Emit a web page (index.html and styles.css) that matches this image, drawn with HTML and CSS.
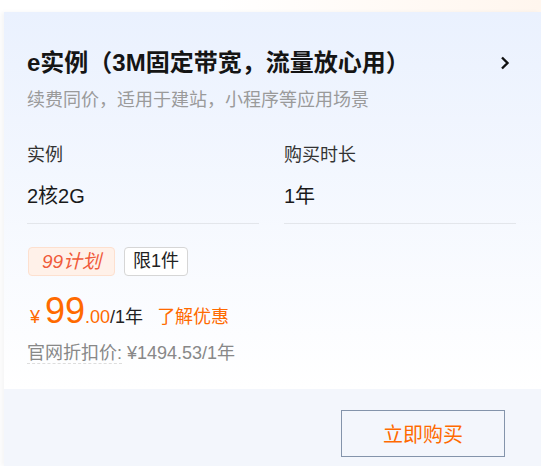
FILE: index.html
```html
<!DOCTYPE html>
<html lang="zh-CN">

<head>
    <meta charset="utf-8">
    <meta name="viewport" content="width=device-width, initial-scale=1">
    <title>e实例</title>
    <link rel="stylesheet" href="styles.css">
</head>

<body>
    <div class="card">
        <div class="card-main">
            <div class="card-head">
                <h2 class="card-title">e实例（3M固定带宽，流量放心用）</h2>
                <svg class="chevron" width="10" height="14" viewBox="0 0 10 14">
                    <path d="M2 1.5 L7.5 7 L2 12.5" fill="none" stroke="#111" stroke-width="2.4" />
                </svg>
            </div>
            <p class="card-desc">续费同价，适用于建站，小程序等应用场景</p>

            <div class="specs">
                <div class="spec">
                    <div class="spec-label">实例</div>
                    <div class="spec-value">2核2G</div>
                </div>
                <div class="spec">
                    <div class="spec-label">购买时长</div>
                    <div class="spec-value">1年</div>
                </div>
            </div>

            <div class="tags">
                <span class="tag tag-plan">99计划</span>
                <span class="tag">限1件</span>
            </div>

            <div class="price">
                <span class="price-yen">¥</span><span class="price-int">99</span><span class="price-dec">.00</span><span class="price-unit">/1年</span>
                <a class="price-link" href="#">了解优惠</a>
            </div>
            <div class="price-orig"><span class="price-orig-label">官网折扣价:</span> ¥1494.53/1年</div>
        </div>
        <div class="card-foot">
            <button class="buy">立即购买</button>
        </div>
    </div>
</body>

</html>
```

FILE: styles.css
```css
body {
    margin: 0;
    height: 466px;
    overflow: hidden;
    background: linear-gradient(90deg, #ffffff 40%, #fff6ee);
    font-family: "Liberation Sans", "Noto Sans CJK SC", sans-serif;
    color: #222;
}

.card {
    margin: 12px 0 0 4px;
    box-shadow: -3px 0 4px rgba(0, 0, 0, 0.04);
}

.card-main {
    height: 342px;
    padding: 35px 25px 0 23px;
    background: linear-gradient(180deg, #eaf1fe, #ffffff);
}

.card-head {
    display: flex;
    align-items: center;
    justify-content: space-between;
}

.card-title {
    margin: 0;
    font-size: 24px;
    line-height: 32px;
    font-weight: bold;
    color: #151515;
}

.chevron {
    margin-right: 6px;
}

.card-desc {
    margin: 8px 0 0;
    font-size: 18px;
    line-height: 26px;
    color: #9a9a9a;
}

.specs {
    display: grid;
    grid-template-columns: 1fr 1fr;
    column-gap: 25px;
    margin-top: 29px;
}

.spec {
    padding-bottom: 13px;
    border-bottom: 1px solid #e3e6eb;
}

.spec-label {
    font-size: 18px;
    line-height: 26px;
    color: #333;
}

.spec-value {
    margin-top: 14px;
    font-size: 20px;
    line-height: 28px;
    color: #1a1a1a;
}

.tags {
    display: flex;
    gap: 9px;
    margin-top: 23px;
    margin-left: 1px;
}

.tag {
    box-sizing: border-box;
    height: 29px;
    padding: 0 8px;
    border: 1px solid #d6d6d6;
    border-radius: 4px;
    background: #fff;
    font-size: 18px;
    line-height: 27px;
    color: #222;
}

.tag-plan {
    width: 87px;
    text-align: center;
    border-color: #fde0cf;
    background: #fff1e9;
    color: #f05a3a;
    font-size: 19px;
    font-style: italic;
}

.price {
    margin-top: 15px;
    margin-left: 3px;
    height: 40px;
    line-height: 40px;
    font-size: 18px;
    color: #ff6a00;
}

.price-yen {
    margin-right: 5px;
}

.price-int {
    font-size: 36px;
}

.price-unit {
    color: #222;
}

.price-link {
    margin-left: 9px;
    color: #ff6a00;
    text-decoration: none;
}

.price-orig {
    margin-top: 9px;
    font-size: 18px;
    line-height: 26px;
    color: #888;
}

.price-orig-label {
    border-bottom: 1px dashed #ddd;
}

.card-foot {
    display: flex;
    justify-content: flex-end;
    height: 77px;
    padding: 21px 36px 0 0;
    box-sizing: border-box;
    background: #f3f6fc;
}

.buy {
    width: 164px;
    height: 47px;
    border: 1px solid #8494ab;
    background: transparent;
    color: #ff6a00;
    font-family: inherit;
    font-size: 20px;
}
```
